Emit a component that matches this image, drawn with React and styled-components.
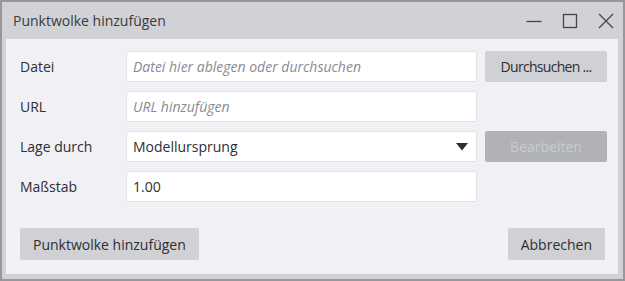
import React from 'react';
import styled, { createGlobalStyle } from 'styled-components';

const GlobalStyle = createGlobalStyle`
  html, body {
    margin: 0;
    padding: 0;
    background: #ffffff;
  }
  * {
    box-sizing: border-box;
  }
`;

const Window = styled.div`
  width: 625px;
  height: 281px;
  display: flex;
  flex-direction: column;
  background: #d1d2d6;
  border: 2px solid #96979c;
  font-family: 'Open Sans', 'Noto Sans', sans-serif;
  font-size: 14px;
  color: #2e2e33;
`;

const TitleBar = styled.div`
  height: 37px;
  display: flex;
  align-items: center;
  justify-content: space-between;
  padding: 0 6px 0 11px;
`;

const Title = styled.span`
  font-size: 14px;
  color: #3a3a40;
`;

const Controls = styled.div`
  display: flex;
  align-items: center;
  gap: 14px;
`;

const ControlButton = styled.button`
  width: 22px;
  height: 22px;
  padding: 0;
  border: none;
  background: transparent;
  display: flex;
  align-items: center;
  justify-content: center;
  color: #45454c;
`;

const Panel = styled.div`
  flex: 1;
  margin: 0 5px 5px 4px;
  background: #f1f1f5;
  padding: 12px 11px 14px 14px;
  display: flex;
  flex-direction: column;
`;

const Form = styled.div`
  display: grid;
  grid-template-columns: 98px 351px 122px;
  grid-auto-rows: 31px;
  row-gap: 9px;
  column-gap: 8px;
  align-items: center;
`;

const Label = styled.label`
  grid-column: 1;
  color: #2e2e33;
  white-space: nowrap;
`;

const Field = styled.div`
  grid-column: 2;
  height: 31px;
  background: #ffffff;
  border: 1px solid #e3e3e8;
  border-radius: 2px;
  display: flex;
  align-items: center;
  justify-content: space-between;
  padding: 0 8px 0 6px;
  color: ${p => (p.$placeholder ? '#8a8a94' : '#2e2e33')};
  font-style: ${p => (p.$placeholder ? 'italic' : 'normal')};
`;

const Button = styled.button`
  height: ${p => (p.$tall ? '32px' : '31px')};
  padding: 0 13px;
  border: none;
  border-radius: 2px;
  font-family: inherit;
  font-size: 14px;
  background: ${p => (p.disabled ? '#b1b2b7' : '#d0d1d5')};
  color: ${p => (p.disabled ? '#c9cacf' : '#2e2e33')};
  white-space: nowrap;
`;

const SideButton = styled(Button)`
  grid-column: 3;
  width: 122px;
  padding: 0;
  letter-spacing: ${p => (p.$compact ? '-0.7px' : 'normal')};
`;

const Footer = styled.div`
  margin-top: auto;
  display: flex;
  justify-content: space-between;
  align-items: center;
  padding-right: 2px;
`;

const Arrow = () => (
  <svg width="12" height="8" viewBox="0 0 12 8">
    <path d="M0 0 H12 L6 7.5 Z" fill="#2d2d36" />
  </svg>
);

export default function App() {
  return (
    <>
      <GlobalStyle />
      <Window>
        <TitleBar>
          <Title>Punktwolke hinzufügen</Title>
          <Controls>
            <ControlButton aria-label="Minimieren">
              <svg width="16" height="16" viewBox="0 0 16 16">
                <path d="M0.5 8.5 H15.5" stroke="currentColor" strokeWidth="1.3" />
              </svg>
            </ControlButton>
            <ControlButton aria-label="Maximieren">
              <svg width="16" height="16" viewBox="0 0 16 16">
                <rect x="1.5" y="1.5" width="13" height="13" fill="none" stroke="currentColor" strokeWidth="1.3" />
              </svg>
            </ControlButton>
            <ControlButton aria-label="Schließen">
              <svg width="16" height="16" viewBox="0 0 16 16">
                <path d="M1 1 L15 15 M15 1 L1 15" stroke="currentColor" strokeWidth="1.3" />
              </svg>
            </ControlButton>
          </Controls>
        </TitleBar>
        <Panel>
          <Form>
            <Label>Datei</Label>
            <Field $placeholder>Datei hier ablegen oder durchsuchen</Field>
            <SideButton $compact>Durchsuchen ...</SideButton>

            <Label>URL</Label>
            <Field $placeholder>URL hinzufügen</Field>
            <span />

            <Label>Lage durch</Label>
            <Field>
              Modellursprung
              <Arrow />
            </Field>
            <SideButton disabled>Bearbeiten</SideButton>

            <Label>Maßstab</Label>
            <Field>1.00</Field>
          </Form>
          <Footer>
            <Button $tall>Punktwolke hinzufügen</Button>
            <Button $tall>Abbrechen</Button>
          </Footer>
        </Panel>
      </Window>
    </>
  );
}
